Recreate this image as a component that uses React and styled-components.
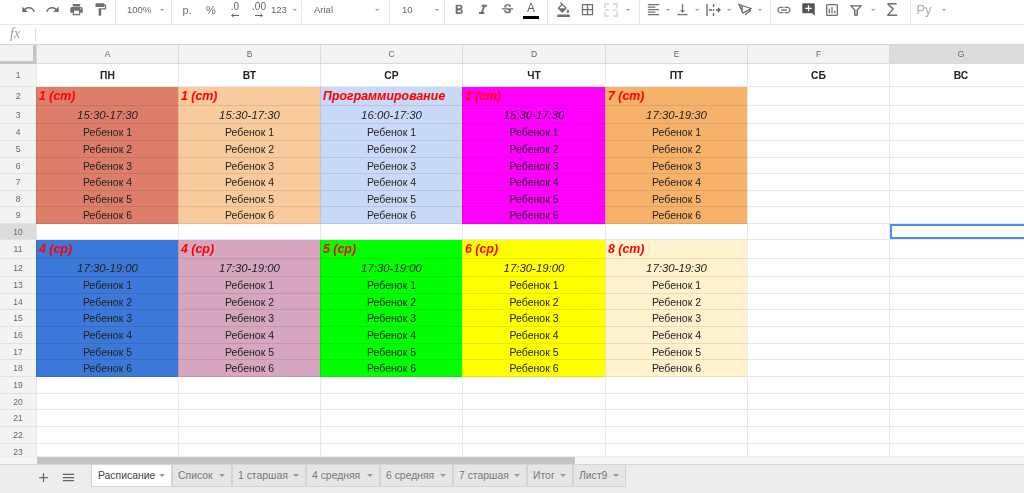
import React from "react";
import styled, { createGlobalStyle } from "styled-components";
import {
  MdUndo,
  MdRedo,
  MdPrint,
  MdFormatPaint,
  MdFormatBold,
  MdFormatItalic,
  MdStrikethroughS,
  MdFormatColorFill,
  MdBorderAll,
  MdFormatAlignLeft,
  MdVerticalAlignBottom,
  MdLink,
  MdAddComment,
  MdOutlineInsertChart,
  MdAdd,
  MdMenu,
} from "react-icons/md";

const GlobalStyle = createGlobalStyle`
  html, body {
    margin: 0;
    padding: 0;
    height: 100%;
    overflow: hidden;
    background: #fff;
    font-family: "Liberation Sans", Arial, sans-serif;
  }
`;

// the reference is a downscaled capture, everything in it is a bit soft
const Page = styled.div`
  width: 1024px;
  height: 493px;
  display: flex;
  flex-direction: column;
  overflow: hidden;
  filter: blur(0.3px);
`;

const Toolbar = styled.div`
  height: 25px;
  flex: none;
  display: flex;
  box-sizing: border-box;
  border-bottom: 1px solid #e8e8e8;
  color: #707070;
`;

const Group = styled.div`
  width: ${(p) => p.$w}px;
  flex: none;
  box-sizing: border-box;
  height: 24px;
  padding-left: ${(p) => p.$pad || 0}px;
  padding-bottom: 5px;
  display: flex;
  align-items: center;
  border-right: ${(p) => (p.$last ? "none" : "1px solid #e8e8e8")};
`;

const Tool = styled.div`
  width: ${(p) => p.$w || 24}px;
  height: 19px;
  flex: none;
  display: flex;
  align-items: center;
  justify-content: center;
  font-size: ${(p) => p.$size || 10}px;
  color: ${(p) => p.$color || "#707070"};
`;

const Label = styled.span`
  font-size: 9.5px;
  color: #666;
  box-sizing: border-box;
  width: ${(p) => p.$w}px;
  padding-left: ${(p) => p.$pad || 0}px;
  flex: none;
`;

const Caret = styled.span`
  width: 0;
  height: 0;
  flex: none;
  margin-left: ${(p) => p.$ml || 0}px;
  border-left: 2.5px solid transparent;
  border-right: 2.5px solid transparent;
  border-top: 2.5px solid #999;
`;

const Decimal = styled.div`
  width: 24px;
  height: 19px;
  flex: none;
  display: flex;
  flex-direction: column;
  align-items: center;
  font-size: 10px;
  line-height: 13px;
  color: #666;
`;

const ColorA = styled.div`
  width: 16px;
  height: 17px;
  margin-top: 1px;
  font-size: 12px;
  line-height: 13px;
  text-align: center;
  color: #666;
  border-bottom: 3px solid #000;
  box-sizing: border-box;
`;

const FormulaBar = styled.div`
  height: 20px;
  flex: none;
  box-sizing: border-box;
  display: flex;
  align-items: center;
  border-bottom: 1px solid #d6d6d6;
`;

const Fx = styled.div`
  width: 36px;
  height: 13px;
  box-sizing: border-box;
  border-right: 1px solid #ddd;
  padding-left: 10px;
  font-family: "Liberation Serif", serif;
  font-style: italic;
  font-size: 14px;
  line-height: 12px;
  color: #999;
`;

const Sheet = styled.div`
  height: 411px;
  flex: none;
  overflow: hidden;
  display: grid;
  grid-template-columns: 36px 142px 142px 142px 143px 142px 142px 143px;
  grid-auto-rows: min-content;
`;

const Corner = styled.div`
  height: 19px;
  box-sizing: border-box;
  background: #f3f3f3;
  border-right: 3px solid #c4c4c4;
  border-bottom: 3px solid #c4c4c4;
`;

const ColHead = styled.div`
  height: 19px;
  box-sizing: border-box;
  display: flex;
  align-items: center;
  justify-content: center;
  font-size: 8.5px;
  color: #666;
  background: ${(p) => (p.$active ? "#dcdcdc" : "#f3f3f3")};
  border-left: 1px solid #d9d9d9;
  border-bottom: 1px solid #d9d9d9;
`;

const RowHead = styled.div`
  height: ${(p) => p.$h}px;
  box-sizing: border-box;
  display: flex;
  align-items: center;
  justify-content: center;
  font-size: 8.5px;
  color: #666;
  background: ${(p) => (p.$active ? "#dcdcdc" : "#f3f3f3")};
  border-bottom: 1px solid #e2e2e2;
`;

const fontSizes = { title: "12.4px", time: "11.4px", head: "10.3px", kid: "10.5px" };

const Cell = styled.div`
  height: ${(p) => p.$h}px;
  box-sizing: border-box;
  display: flex;
  align-items: center;
  overflow: hidden;
  white-space: nowrap;
  justify-content: ${(p) => (p.$kind === "title" ? "flex-start" : "center")};
  padding-left: ${(p) => (p.$kind === "title" ? "2px" : "0")};
  background: ${(p) => p.$bg || "#fff"};
  border-left: 1px solid rgba(0, 0, 0, 0.09);
  border-bottom: 1px solid rgba(0, 0, 0, 0.09);
  box-shadow: ${(p) => (p.$selected ? "inset 0 0 0 2px #4d8cf0" : "none")};
  color: ${(p) => (p.$kind === "title" ? "#ff0000" : "#222")};
  font-size: ${(p) => fontSizes[p.$kind] || "10px"};
  font-weight: ${(p) => (p.$kind === "title" || p.$kind === "head" ? "bold" : "normal")};
  font-style: ${(p) => (p.$kind === "title" || p.$kind === "time" ? "italic" : "normal")};
`;

const ScrollRow = styled.div`
  height: 8px;
  flex: none;
  display: flex;
  background: #f6f6f6;
  border-top: 1px solid #eee;
  box-sizing: border-box;
`;

const Gap = styled.div`
  width: ${(p) => p.$w}px;
  flex: none;
`;

const ScrollThumb = styled.div`
  width: 538px;
  background: #c4c4c4;
`;

const TabBar = styled.div`
  flex: 1;
  display: flex;
  align-items: flex-start;
  background: #ededed;
  border-top: 1px solid #d6d6d6;
`;

const SheetButton = styled.div`
  width: 25px;
  height: 24px;
  flex: none;
  display: flex;
  align-items: center;
  justify-content: center;
  color: #666;
  font-size: 15px;
`;

const Tab = styled.div`
  width: ${(p) => p.$w}px;
  height: ${(p) => (p.$active ? 23 : 22)}px;
  flex: none;
  box-sizing: border-box;
  margin-top: ${(p) => (p.$active ? -1 : 0)}px;
  padding-left: ${(p) => (p.$active ? 6 : 5)}px;
  display: flex;
  align-items: center;
  font-size: 10.4px;
  color: ${(p) => (p.$active ? "#444" : "#777")};
  background: ${(p) => (p.$active ? "#fff" : "#e6e6e6")};
  border: 1px solid #d4d4d4;
  border-top: ${(p) => (p.$active ? "1px solid #d4d4d4" : "none")};
`;

const TabName = styled.span`
  flex: 1;
`;

const TabCaret = styled(Caret)`
  margin-right: 6px;
  border-left-width: 3px;
  border-right-width: 3px;
  border-top-width: 3px;
`;

const colors1 = ["#dd7e6b", "#f9cb9c", "#c9daf8", "#ff00ff", "#f6b26b"];
const colors2 = ["#3c78d8", "#d5a6bd", "#00ff00", "#ffff00", "#fff2cc"];

const kids = ["Ребенок 1", "Ребенок 2", "Ребенок 3", "Ребенок 4", "Ребенок 5", "Ребенок 6"];

const block = (titles, times, colors) => [
  titles.map((t, i) => ({ text: t, kind: "title", bg: colors[i] })),
  times.map((t, i) => ({ text: t, kind: "time", bg: colors[i] })),
  ...kids.map((k) => colors.map((c) => ({ text: k, kind: "kid", bg: c }))),
];

const empty = [];

const rows = [
  ["ПН", "ВТ", "СР", "ЧТ", "ПТ", "СБ", "ВС"].map((t) => ({ text: t, kind: "head" })),
  ...block(
    ["1 (ст)", "1 (ст)", "Программирование", "3 (ст)", "7 (ст)"],
    ["15:30-17:30", "15:30-17:30", "16:00-17:30", "15:30-17:30", "17:30-19:30"],
    colors1
  ),
  empty,
  ...block(
    ["4 (ср)", "4 (ср)", "5 (ср)", "6 (ср)", "8 (ст)"],
    ["17:30-19:00", "17:30-19:00", "17:30-19:00", "17:30-19:00", "17:30-19:30"],
    colors2
  ),
  empty,
  empty,
  empty,
  empty,
  empty,
];

const heights = [23, 19, 18, 17, 17, 16, 17, 16, 17, 16, 19, 18, 17, 16, 17, 17, 16, 17, 17, 16, 17, 17, 16];

const tabs = [
  ["Расписание", 81],
  ["Список", 60],
  ["1 старшая", 74],
  ["4 средняя", 74],
  ["6 средняя", 73],
  ["7 старшая", 74],
  ["Итог", 46],
  ["Лист9", 53],
];

function ArrowDecimal({ text, flip }) {
  return (
    <Decimal>
      <span>{text}</span>
      <svg width="10" height="5" viewBox="0 0 10 5" style={{ transform: flip ? "scaleX(-1)" : "none" }}>
        <path d="M9 2.5H2M3.5 .8 1.5 2.5 3.5 4.2" fill="none" stroke="#666" strokeWidth="1" />
      </svg>
    </Decimal>
  );
}

function MergeIcon() {
  return (
    <svg width="14" height="14" viewBox="0 0 14 14" fill="none" stroke="#d4d4d4" strokeWidth="1.4">
      <path d="M1 5V1h4M9 1h4v4M1 9v4h4M9 13h4V9M1 7h4M9 7h4" />
    </svg>
  );
}

function WrapIcon() {
  return (
    <svg width="15" height="14" viewBox="0 0 15 14" fill="none" stroke="#666" strokeWidth="1.3">
      <path d="M1 1v12M7.5 1v3M7.5 6v2M7.5 10v3M14 7H10M12 5l2 2-2 2M6 7H3" />
    </svg>
  );
}

function RotateIcon() {
  return (
    <svg width="14" height="14" viewBox="0 0 14 14" fill="none" stroke="#666" strokeWidth="1.3">
      <path d="M1 1.5 13 5.5 5 10ZM4 3v6M7 12l6 -5" />
    </svg>
  );
}

function FilterIcon() {
  return (
    <svg width="12" height="12" viewBox="0 0 13 13" fill="none" stroke="#666" strokeWidth="1.5">
      <path d="M1 2h11L7.8 6.6V12H5.2V6.6Z" />
    </svg>
  );
}

function App() {
  return (
    <Page>
      <GlobalStyle />
      <Toolbar>
        <Group $w={116} $pad={16}>
          <Tool><MdUndo size={15} /></Tool>
          <Tool><MdRedo size={15} /></Tool>
          <Tool><MdPrint size={15} /></Tool>
          <Tool><MdFormatPaint size={15} /></Tool>
        </Group>
        <Group $w={56}>
          <Label $w={44} $pad={11}>100%</Label>
          <Caret />
        </Group>
        <Group $w={130} $pad={3}>
          <Tool $size={11}>р.</Tool>
          <Tool $size={11}>%</Tool>
          <ArrowDecimal text=".0" />
          <ArrowDecimal text=".00" flip />
          <Label $w={22} $pad={0}>123</Label>
          <Caret />
        </Group>
        <Group $w={88}>
          <Label $w={73} $pad={12}>Arial</Label>
          <Caret />
        </Group>
        <Group $w={55}>
          <Label $w={45} $pad={12}>10</Label>
          <Caret />
        </Group>
        <Group $w={103} $pad={2}>
          <Tool><MdFormatBold size={16} /></Tool>
          <Tool><MdFormatItalic size={16} /></Tool>
          <Tool><MdStrikethroughS size={15} /></Tool>
          <Tool><ColorA>A</ColorA></Tool>
        </Group>
        <Group $w={92} $pad={3}>
          <Tool><MdFormatColorFill size={15} /></Tool>
          <Tool><MdBorderAll size={15} /></Tool>
          <Tool><MergeIcon /></Tool>
          <Caret $ml={3} />
        </Group>
        <Group $w={131} $pad={1}>
          <Tool><MdFormatAlignLeft size={15} /></Tool>
          <Caret $ml={1} />
          <Tool $w={25}><MdVerticalAlignBottom size={15} /></Tool>
          <Caret />
          <Tool $w={28}><WrapIcon /></Tool>
          <Caret />
          <Tool $w={27}><RotateIcon /></Tool>
          <Caret />
        </Group>
        <Group $w={140} $pad={1}>
          <Tool><MdLink size={16} /></Tool>
          <Tool $color="#555"><MdAddComment size={15} /></Tool>
          <Tool><MdOutlineInsertChart size={16} /></Tool>
          <Tool><FilterIcon /></Tool>
          <Caret $ml={3} />
          <Tool $w={34} $size={19}>Σ</Tool>
        </Group>
        <Group $w={60} $last>
          <Tool $w={26} $size={13} $color="#aaa">Ру</Tool>
          <Caret $ml={5} />
        </Group>
      </Toolbar>

      <FormulaBar>
        <Fx>fx</Fx>
      </FormulaBar>

      <Sheet>
        <Corner />
        {["A", "B", "C", "D", "E", "F", "G"].map((c) => (
          <ColHead key={c} $active={c === "G"}>{c}</ColHead>
        ))}
        {heights.map((h, r) => (
          <React.Fragment key={r}>
            <RowHead $h={h} $active={r === 9}>{r + 1}</RowHead>
            {[0, 1, 2, 3, 4, 5, 6].map((c) => {
              const cell = rows[r][c] || {};
              return (
                <Cell key={c} $h={h} $kind={cell.kind} $bg={cell.bg} $selected={r === 9 && c === 6}>
                  {cell.text}
                </Cell>
              );
            })}
          </React.Fragment>
        ))}
      </Sheet>

      <ScrollRow>
        <Gap $w={37} />
        <ScrollThumb />
      </ScrollRow>

      <TabBar>
        <Gap $w={31} />
        <SheetButton><MdAdd /></SheetButton>
        <SheetButton><MdMenu /></SheetButton>
        <Gap $w={10} />
        {tabs.map(([name, w], i) => (
          <Tab key={name} $w={w} $active={i === 0}>
            <TabName>{name}</TabName>
            <TabCaret />
          </Tab>
        ))}
      </TabBar>
    </Page>
  );
}

export default App;
